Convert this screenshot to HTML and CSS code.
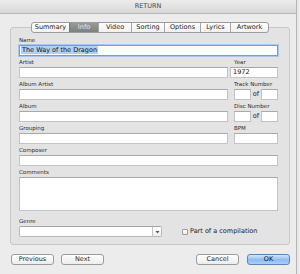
FILE: index.html
```html
<!DOCTYPE html>
<html>
<head>
<meta charset="utf-8">
<link rel="stylesheet" href="styles.css">
</head>
<body>
<div class="window">
  <div class="titlebar">RETURN</div>
  <div class="content">
    <div class="tabs">
      <div class="tab t-summary">Summary</div>
      <div class="tab t-info selected">Info</div>
      <div class="tab t-video">Video</div>
      <div class="tab t-sorting">Sorting</div>
      <div class="tab t-options">Options</div>
      <div class="tab t-lyrics">Lyrics</div>
      <div class="tab t-artwork">Artwork</div>
    </div>
    <div class="panel">
      <div class="row">
        <div class="group full">
          <div class="label">Name</div>
          <div class="input focus"><span class="sel">The Way of the Dragon</span></div>
        </div>
      </div>
      <div class="row">
        <div class="group left">
          <div class="label">Artist</div>
          <div class="input"></div>
        </div>
        <div class="group right">
          <div class="label">Year</div>
          <div class="input year">1972</div>
        </div>
      </div>
      <div class="row">
        <div class="group left">
          <div class="label">Album Artist</div>
          <div class="input"></div>
        </div>
        <div class="group right">
          <div class="label">Track Number</div>
          <div class="pair"><div class="input small"></div><span class="of">of</span><div class="input small"></div></div>
        </div>
      </div>
      <div class="row">
        <div class="group left">
          <div class="label">Album</div>
          <div class="input"></div>
        </div>
        <div class="group right">
          <div class="label">Disc Number</div>
          <div class="pair"><div class="input small"></div><span class="of">of</span><div class="input small"></div></div>
        </div>
      </div>
      <div class="row">
        <div class="group left">
          <div class="label">Grouping</div>
          <div class="input"></div>
        </div>
        <div class="group right">
          <div class="label">BPM</div>
          <div class="input"></div>
        </div>
      </div>
      <div class="row">
        <div class="group full">
          <div class="label">Composer</div>
          <div class="input"></div>
        </div>
      </div>
      <div class="row">
        <div class="group full">
          <div class="label">Comments</div>
          <div class="input area"></div>
        </div>
      </div>
      <div class="row genre-row">
        <div class="group genre">
          <div class="label">Genre</div>
          <div class="combo"><div class="combo-text"></div><div class="combo-btn"><svg width="5" height="4" viewBox="0 0 5 4"><path d="M0.5 1 L4.5 1 L2.5 3.5 Z" fill="#555"/></svg></div></div>
        </div>
        <div class="compilation">
          <span class="checkbox"></span><span class="check-label">Part of a compilation</span>
        </div>
      </div>
    </div>
    <div class="buttons">
      <div class="btn-group">
        <div class="btn">Previous</div>
        <div class="btn">Next</div>
      </div>
      <div class="btn-group wide">
        <div class="btn">Cancel</div>
        <div class="btn primary">OK</div>
      </div>
    </div>
  </div>
</div>
</body>
</html>
```
FILE: styles.css
```css
* { box-sizing: border-box; }
html, body { margin: 0; padding: 0; }
body {
  background: #e9e9e9;
  font-family: "DejaVu Sans", sans-serif;
  color: #222;
  width: 300px;
  height: 274px;
  overflow: hidden;
}
.window {
  width: 297px;
  height: 274px;
  background: #ececec;
  border-right: 1px solid #b4b4b4;
}
.titlebar {
  height: 14px;
  line-height: 13px;
  text-align: center;
  font-size: 6.5px;
  color: #4a4a4a;
  background: linear-gradient(#ececec, #d8d8d8);
  border-bottom: 1px solid #b9b9b9;
}
.content {
  padding: 8px 6px 0 10px;
}
.tabs {
  display: flex;
  margin-left: 21px;
  height: 11px;
  margin-bottom: -6px;
  position: relative;
  z-index: 1;
  width: max-content;
  border: 1px solid #9c9c9c;
  border-radius: 3px;
  background: linear-gradient(#ffffff, #f1f1f1);
  overflow: hidden;
}
.tab {
  font-size: 6.5px;
  line-height: 9px;
  text-align: center;
  color: #222;
  border-left: 1px solid #a6a6a6;
}
.tab:first-child { border-left: none; }
.t-summary { width: 37px; }
.t-info { width: 29px; }
.t-video { width: 33px; }
.t-sorting { width: 33px; }
.t-options { width: 36px; }
.t-lyrics { width: 30px; }
.t-artwork { width: 38px; }
.tab.selected {
  background: linear-gradient(#9a9a9a, #7f7f7f);
  color: #e9e9e9;
  border-left-color: #777;
}
.panel {
  width: 280px;
  background: #e3e3e3;
  border: 1px solid #c7c7c7;
  border-radius: 3px;
  padding: 8px 11px 7px 8px;
  display: flex;
  flex-direction: column;
  gap: 2px;
}
.row {
  display: flex;
}
.group { display: flex; flex-direction: column; }
.group.full { flex: 1; }
.group.left { width: 209px; }
.group.right { width: 44px; margin-left: 6px; }
.label {
  font-size: 5.5px;
  line-height: 9px;
  height: 9px;
  color: #2a2a2a;
}
.input {
  height: 11px;
  background: #fff;
  border: 1px solid #c3c3c3;
  border-top-color: #a9a9a9;
  font-size: 6.5px;
  line-height: 9px;
  padding: 0 2px;
  color: #111;
  white-space: nowrap;
  overflow: hidden;
}
.input.focus {
  border: 1px solid #6e9fdc;
  box-shadow: 0 0 0 1px #a8c6ee;
  padding-left: 1px;
}
.sel { background: #b3cff1; padding: 0 1px; }
.input.year { margin-left: -4px; width: 48px; }
.input.area { height: 34px; }
.pair { display: flex; align-items: center; }
.input.small { width: 17px; }
.of { font-size: 6.5px; width: 10px; text-align: center; line-height: 9px; }
.genre-row { margin-top: 4px; align-items: flex-end; }
.group.genre { width: 143px; }
.combo {
  display: flex;
  height: 11px;
  background: #fff;
  border: 1px solid #b9b9b9;
  border-top-color: #a5a5a5;
  border-radius: 2px;
}
.combo-text { flex: 1; }
.combo-btn {
  width: 9px;
  border-left: 1px solid #c4c4c4;
  background: linear-gradient(#ffffff, #efefef);
  display: flex;
  align-items: center;
  justify-content: center;
}
.compilation {
  display: flex;
  align-items: center;
  margin-left: 20px;
  height: 11px;
}
.checkbox {
  width: 6px;
  height: 6px;
  border: 1px solid #9a9a9a;
  border-radius: 1px;
  background: linear-gradient(#fff, #ececec);
}
.check-label {
  font-size: 6.5px;
  margin-left: 2px;
  line-height: 9px;
  color: #222;
}
.buttons {
  display: flex;
  justify-content: space-between;
  margin-top: 9px;
  width: 280px;
  padding-left: 1px;
}
.btn-group { display: flex; gap: 7px; }
.btn-group.wide { gap: 8px; }
.btn {
  width: 43px;
  height: 11px;
  border: 1px solid #9b9b9b;
  border-radius: 3px;
  background: linear-gradient(#ffffff, #ececec);
  font-size: 6.5px;
  line-height: 9px;
  text-align: center;
  color: #1e1e1e;
}
.btn.primary {
  border-color: #5c84bb;
  background: linear-gradient(#d3e6fb, #8dbcf0 55%, #a9d0f7);
  color: #111;
}
```
